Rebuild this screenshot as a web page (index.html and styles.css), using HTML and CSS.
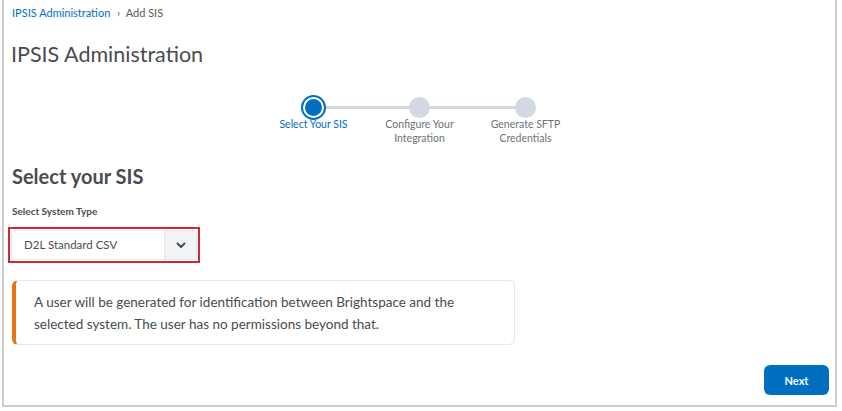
FILE: index.html
```html
<!DOCTYPE html>
<html lang="en">
<head>
    <meta charset="UTF-8">
    <title>Add SIS</title>
    <link rel="stylesheet" href="styles.css">
</head>
<body>
    <div class="frame">
        <div class="crumbs">
            <a href="#">IPSIS Administration</a>
            <span class="sep">&rsaquo;</span>
            <span>Add SIS</span>
        </div>
        <h1>IPSIS Administration</h1>

        <div class="stepper">
            <div class="step active">
                <div class="dot"></div>
                <div class="label">Select Your SIS</div>
            </div>
            <div class="step">
                <div class="dot"></div>
                <div class="label">Configure Your<br>Integration</div>
            </div>
            <div class="step last">
                <div class="dot"></div>
                <div class="label">Generate SFTP<br>Credentials</div>
            </div>
        </div>

        <h2>Select your SIS</h2>
        <div class="fieldlabel">Select System Type</div>
        <div class="highlight">
            <div class="select">
                <span class="value">D2L Standard CSV</span>
                <span class="chev">
                    <svg width="10" height="7" viewBox="0 0 10 7"><path d="M1.5 1.5 L5 5 L8.5 1.5" fill="none" stroke="#494c4e" stroke-width="2" stroke-linecap="round" stroke-linejoin="round"/></svg>
                </span>
            </div>
        </div>

        <div class="alert">
            A user will be generated for identification between Brightspace and the selected system. The user has no permissions beyond that.
        </div>

        <div class="footer">
            <button class="next">Next</button>
        </div>
    </div>
</body>
</html>
```

FILE: styles.css
```css
body {
    margin: 0;
    font-family: Lato, "Noto Sans", sans-serif;
    color: #494c4e;
    background: #fff;
}

.frame {
    margin-left: 2px;
    width: 835px;
    height: 407px;
    border: 2px solid #cdcdcd;
    border-top: none;
    padding: 0 6px 0 6px;
    box-sizing: border-box;
    display: flex;
    flex-direction: column;
}

.crumbs {
    font-size: 11px;
    margin-top: 6px;
    height: 14px;
    color: #565a5c;
    padding-left: 2px;
}

.crumbs a {
    color: #006fbf;
    text-decoration: none;
}

.crumbs .sep {
    margin: 0 3px 0 4px;
}

h1 {
    margin: 20px 0 0 1px;
    font-size: 21.5px;
    font-weight: 400;
    line-height: 28px;
    color: #494c4e;
}

.stepper {
    display: flex;
    justify-content: center;
    margin-top: 29px;
    padding-left: 0;
}

.step {
    width: 106px;
    display: flex;
    flex-direction: column;
    align-items: center;
    position: relative;
}

.step::after {
    content: "";
    position: absolute;
    top: 9px;
    left: 53px;
    width: 106px;
    height: 3px;
    background: #d3d9e3;
}

.step.last::after {
    display: none;
}

.dot {
    width: 21px;
    height: 21px;
    border-radius: 50%;
    background: #d3d9e3;
    position: relative;
    z-index: 1;
    box-sizing: border-box;
}

.step.active .dot {
    background: #006fbf;
    border: 2px solid #fff;
    box-shadow: 0 0 0 2px #006fbf;
}

.label {
    margin-top: -1px;
    font-size: 10.5px;
    line-height: 14px;
    text-align: center;
    color: #6e7376;
}

.step.active .label {
    color: #006fbf;
}

h2 {
    margin: 18px 0 0 2px;
    font-size: 20px;
    font-weight: 700;
    line-height: 26px;
    color: #494c4e;
}

.fieldlabel {
    margin: 16px 0 0 2px;
    font-size: 10px;
    font-weight: 700;
    color: #494c4e;
}

.highlight {
    margin: 10px 0 0 -2px;
    width: 192px;
    height: 36px;
    border: 2px solid #d3262e;
    box-sizing: border-box;
    padding: 1px;
}

.select {
    height: 100%;
    display: flex;
    border: 1px solid #e3e9f1;
    border-radius: 5px;
    box-sizing: border-box;
    overflow: hidden;
    background: #fff;
}

.select .value {
    flex: 1;
    font-size: 11.5px;
    line-height: 28px;
    padding-left: 12px;
}

.chev {
    width: 31px;
    background: #f1f3f5;
    border-left: 1px solid #e3e9f1;
    display: flex;
    align-items: center;
    justify-content: center;
}

.alert {
    margin: 17px 0 0 2px;
    width: 503px;
    height: 65px;
    box-sizing: border-box;
    border: 1px solid #e3e9f1;
    border-left: 4px solid #e87511;
    border-radius: 6px;
    padding: 10px 20px 0 18px;
    font-size: 13.5px;
    line-height: 22px;
    color: #494c4e;
}

.footer {
    display: flex;
    justify-content: flex-end;
    margin-top: 20px;
}

.next {
    width: 65px;
    height: 30px;
    border: none;
    border-radius: 6px;
    background: #006fbf;
    color: #fff;
    font-family: Lato, "Noto Sans", sans-serif;
    font-size: 11px;
    font-weight: 700;
    cursor: pointer;
}
```
